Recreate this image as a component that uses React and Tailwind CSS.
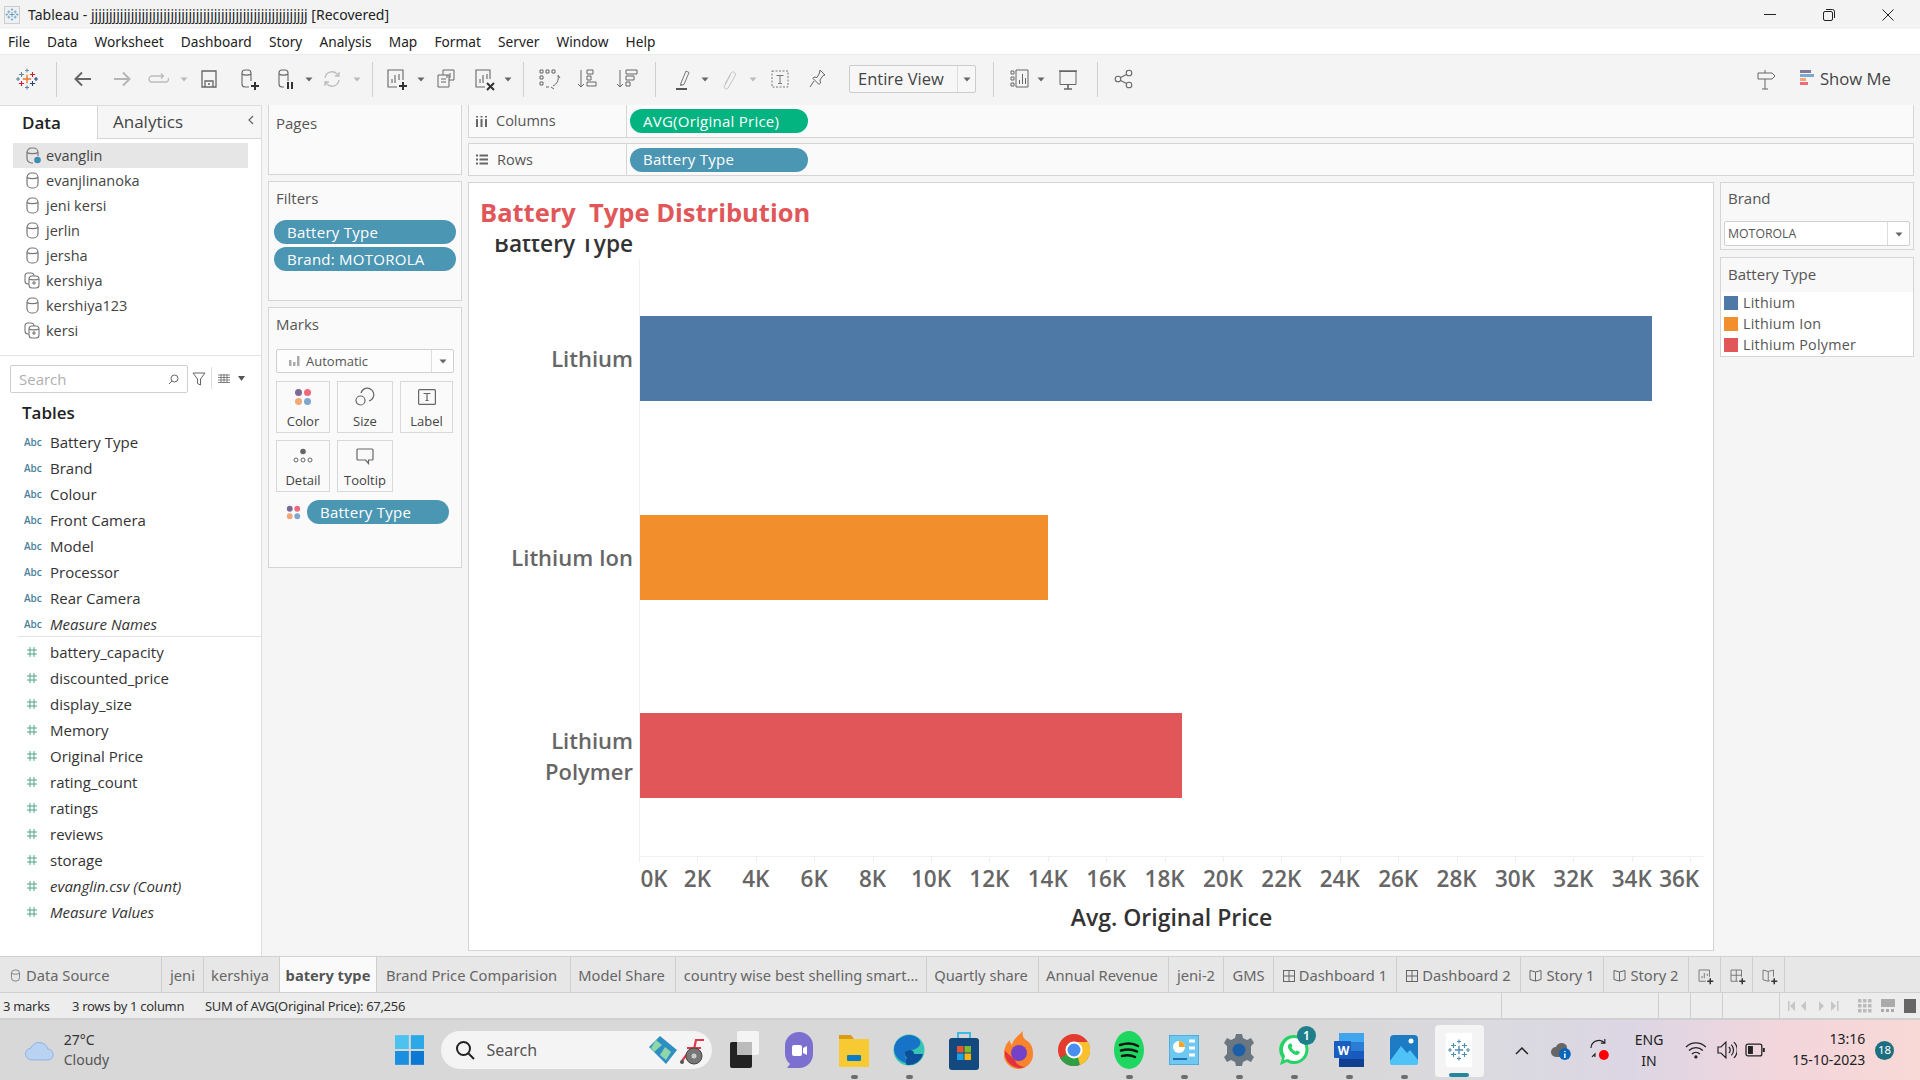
import React from "react";

const I = ({ c = "w-6 h-6 text-[#666]", sw = 1.3, children }) => (
  <svg className={c} viewBox="0 0 24 24" fill="none" stroke="currentColor" strokeWidth={sw}>{children}</svg>
);
const Dd = ({ c = "", light }) => (
  <svg className={`w-2 h-6 ${c} ${light ? "text-[#bbb]" : "text-[#666]"}`} viewBox="0 0 8 24"><path d="M0.5 10.5h7L4 14.5z" fill="currentColor" /></svg>
);
const Sep = ({ c }) => <div className={`w-px h-[35px] bg-[#d0d0d0] ${c}`} />;

const Cross = ({ x, y, r, col, w = 1.1 }) => (
  <path d={`M${x - r} ${y}H${x + r}M${x} ${y - r}V${y + r}`} stroke={col} strokeWidth={w} />
);
const TabLogo = ({ c, mono }) => (
  <svg className={c} viewBox="0 0 24 24" fill="none">
    <Cross x={12} y={12} r={4.2} col={mono || "#e8762c"} w={1.4} />
    <Cross x={6.5} y={7.5} r={2.6} col={mono || "#5b879b"} />
    <Cross x={17.5} y={7.5} r={2.6} col={mono || "#c72035"} />
    <Cross x={6.5} y={16.5} r={2.6} col={mono || "#c72035"} />
    <Cross x={17.5} y={16.5} r={2.6} col={mono || "#1f447e"} />
    <Cross x={12} y={3.5} r={2} col={mono || "#7099a6"} />
    <Cross x={12} y={20.5} r={2} col={mono || "#5b879b"} />
    <Cross x={3} y={12} r={2} col={mono || "#59879b"} />
    <Cross x={21} y={12} r={2} col={mono || "#1f447e"} />
  </svg>
);
const Plus = () => <path d="M15 19h8M19 15v8" stroke="#333" strokeWidth="2" />;

const Cyl = ({ c = "w-[15px] h-[17px] text-[#777]" }) => (
  <svg className={c} viewBox="0 0 15 17" fill="none" stroke="currentColor" strokeWidth="1.2">
    <rect x="2" y="1" width="11" height="15" rx="4.5" />
    <path d="M2 5.5c2 1.6 9 1.6 11 0" />
  </svg>
);
const CylCheck = () => (
  <svg className="w-[16px] h-[17px] text-[#777]" viewBox="0 0 16 17" fill="none" stroke="currentColor" strokeWidth="1.2">
    <path d="M8 16H6.5A4.5 4.5 0 0 1 2 11.500V5.500A4.500 4.500 0 0 1 6.500 1h2A4.500 4.500 0 0 1 13 5.500V9" />
    <path d="M2 5.500c2 1.600 9 1.600 11 0" />
    <circle cx="12.500" cy="13" r="3.300" fill="#3f8db0" stroke="none" />
  </svg>
);
const CylMulti = () => (
  <svg className="w-[16px] h-[17px] text-[#777]" viewBox="0 0 16 17" fill="none" stroke="currentColor" strokeWidth="1.1">
    <rect x="1" y="1" width="9" height="11" rx="3" />
    <rect x="5" y="4" width="10" height="12" rx="3" fill="#fff" />
    <path d="M5 7c2 1.200 8 1.200 10 0M8 11h4M10 9v4" />
  </svg>
);

const Dots = ({ c = "w-[18px] h-[18px]" }) => (
  <svg className={c} viewBox="0 0 18 18">
    <circle cx="4.500" cy="4.500" r="3.500" fill="#7b6a96" />
    <circle cx="13.500" cy="4.500" r="3.500" fill="#ef6a7a" />
    <circle cx="4.500" cy="13.500" r="3.500" fill="#f2a777" />
    <circle cx="13.500" cy="13.500" r="3.500" fill="#7ea6d0" />
  </svg>
);

const Pill = ({ c, children, green }) => (
  <div className={`${c} rounded-full flex items-center text-white text-[15px] tracking-[0.25px] ${green ? "bg-[#03b380]" : "bg-[#4b96b3]"}`}>{children}</div>
);

const Card = ({ c, title, pt = "pt-[8px]", children }) => (
  <div className={`${c} bg-[#fafafa] border border-[#d5d5d5]`}>
    <div className={`pl-[7px] ${pt} text-[15px] leading-5 text-[#555]`}>{title}</div>
    {children}
  </div>
);

const MarkBtn = ({ c, label, children }) => (
  <div className={`${c} h-[52px] border border-[#d8d8d8] flex flex-col items-center justify-between pt-[3px] pb-[2px] text-[13px] leading-[18px] text-[#444]`}>
    <div className="h-6 flex items-center justify-center">{children}</div>
    <div>{label}</div>
  </div>
);

const dims = ["Battery Type", "Brand", "Colour", "Front Camera", "Model", "Processor", "Rear Camera"];
const meas = ["battery_capacity", "discounted_price", "display_size", "Memory", "Original Price", "rating_count", "ratings", "reviews", "storage"];

const Field = ({ kind, label, italic }) => (
  <div className="h-[26px] flex items-center">
    {kind === "abc" ? (
      <div className="w-[50px] pl-6 text-[10px] font-semibold text-[#4a7f9b]">Abc</div>
    ) : (
      <div className="w-[50px] pl-[26px]">
        <svg className="w-3 h-3 text-[#4ea488]" viewBox="0 0 12 12" fill="none" stroke="currentColor" strokeWidth="1"><path d="M4 1v10M8 1v10M1 4h10M1 8h10" /></svg>
      </div>
    )}
    <div className={`text-[15px] text-[#333] ${italic ? "italic" : ""}`}>{label}</div>
  </div>
);

const ticks = ["0K", "2K", "4K", "6K", "8K", "10K", "12K", "14K", "16K", "18K", "20K", "22K", "24K", "26K", "28K", "30K", "32K", "34K", "36K"];

const Tab = ({ c, children, active }) => (
  <div className={`${c} h-full shrink-0 border-r border-[#cfcfcf] flex items-center justify-center pt-[2px] text-[14.700px] whitespace-nowrap ${active ? "bg-[#fafafa] font-bold text-[#555]" : "text-[#666]"}`}>{children}</div>
);
const Grid4 = () => (
  <svg className="w-[12px] h-[12px] mr-1 text-[#666]" viewBox="0 0 12 12" fill="none" stroke="currentColor"><rect x=".5" y=".5" width="11" height="11" /><path d="M6 .5v11M.5 6h11" /></svg>
);
const Book = () => (
  <svg className="w-[13px] h-[13px] mr-1 text-[#666]" viewBox="0 0 13 13" fill="none" stroke="currentColor"><path d="M1 1.500l5.500 1.500L12 1.500v9l-5.500 1.500L1 10.500zM6.500 3v9" /></svg>
);

const Slot = ({ c, children, dot }) => (
  <div className={`${c} w-[55px] h-full relative flex items-center justify-center shrink-0`}>
    {children}
    {dot && <div className="absolute bottom-[1px] w-[7px] h-[4px] rounded-full bg-[#6e6e6e]" />}
  </div>
);

export default function App() {
  return (
    <div className="w-[1920px] h-[1080px] overflow-hidden flex flex-col bg-[#f5f5f5] text-[#333] font-['Open_Sans','Noto_Sans',sans-serif]">
      {/* Title bar */}
      <div className="h-[29px] shrink-0 bg-[#f3f3f3] flex items-center pl-1 relative">
        <div className="w-[16px] h-[18px] bg-[#eef1f3] border border-[#ccc] flex items-center justify-center"><TabLogo c="w-[15px] h-[15px]" mono="#4f8db5" /></div>
        <div className="ml-2 text-[14px] text-[#222] whitespace-nowrap font-['Noto_Sans',sans-serif]">Tableau - <span>jjjjjjjjjjjjjjjjjjjjjjjjjjjjjjjjjjjjjjjjjjjjjjjjjjjjjjjjjjjj</span> [Recovered]</div>
        <div className="ml-auto flex items-center text-[#222]">
          <div className="w-[58px] flex justify-center"><div className="w-3 h-px bg-[#222]" /></div>
          <div className="w-[60px] flex justify-center">
            <svg className="w-3 h-3" viewBox="0 0 12 12" fill="none" stroke="currentColor"><rect x=".5" y="2.500" width="9" height="9" rx="1.500" /><path d="M3 .5h6.500A2 2 0 0 1 11.500 2.500V9" /></svg>
          </div>
          <div className="w-[58px] mr-[3px] flex justify-center">
            <svg className="w-3 h-3" viewBox="0 0 12 12" fill="none" stroke="currentColor"><path d="M.5.5l11 11M11.500.5l-11 11" /></svg>
          </div>
        </div>
      </div>
      {/* Menu */}
      <div className="h-[25px] shrink-0 bg-white flex items-center pl-2 pt-px gap-[17.200px] text-[13.700px] text-[#222] font-['Noto_Sans',sans-serif]">
        {["File", "Data", "Worksheet", "Dashboard", "Story", "Analysis", "Map", "Format", "Server", "Window", "Help"].map((m) => <span key={m}>{m}</span>)}
      </div>
      {/* Toolbar */}
      <div className="h-[51px] shrink-0 bg-[#f4f4f4] border-t border-[#ececec] flex items-center pb-[2px]">
        <div className="ml-[15px]"><TabLogo c="w-6 h-6" /></div>
        <Sep c="ml-[17px]" />
        <div className="ml-[14px]"><I sw={2} c="w-6 h-6 text-[#666]"><path d="M20 12H5M11 5.500L4.500 12l6.500 6.500" /></I></div>
        <div className="ml-[15px]"><I sw={2} c="w-6 h-6 text-[#b5b5b5]"><path d="M4 12h15M13 5.500l6.500 6.500-6.500 6.500" /></I></div>
        <div className="ml-[13px]"><I c="w-6 h-6 text-[#bcbcbc]"><path d="M16 9H5a2.500 2.500 0 0 0 0 6h14a2.500 2.500 0 0 0 2-4M14 6.500L16.500 9 14 11.500" /></I></div>
        <Dd c="ml-[9px]" light />
        <div className="ml-[9px]"><I><path d="M5 4h14v16H5zM8 20v-6h8v6M11 17h2" /></I></div>
        <div className="ml-[15px]"><I sw={1.1}><path d="M13 20H9a3 3 0 0 1-3-3V6a3 3 0 0 1 3-3h3a3 3 0 0 1 3 3v8M6 7c2 1.500 7 1.500 9 0" /><Plus /></I></div>
        <div className="ml-[13px]"><I sw={1.1}><path d="M11 20H9a3 3 0 0 1-3-3V6a3 3 0 0 1 3-3h3a3 3 0 0 1 3 3v8M6 7c2 1.500 7 1.500 9 0" /><path d="M15 15v7M19 15v7" stroke="#333" strokeWidth="2" /></I></div>
        <Dd c="ml-[8px]" />
        <div className="ml-[7px]"><I c="w-6 h-6 text-[#bcbcbc]"><path d="M5 11a7 7 0 0 1 12-4l2 2M19 13a7 7 0 0 1-12 4l-2-2M19 5v4h-4M5 19v-4h4" /></I></div>
        <Dd c="ml-[9px]" light />
        <Sep c="ml-[11px]" />
        <div className="ml-[11px]"><I sw={1.1}><path d="M13 20H4V3h15v10M8 16v-4M11 16V8M15 13V7" /><Plus /></I></div>
        <Dd c="ml-[9px]" />
        <div className="ml-[9px]"><I sw={1}><path d="M9 8V3h11v10h-5M13 11V8M16 11V6M4 8h11v12H4zM7 12h5M7 15h5" /></I></div>
        <div className="ml-[14px]"><I sw={1.1}><path d="M13 20H4V3h14v9M8 16v-4M11 16V8M15 12V7" /><path d="M15 16l7 7M22 16l-7 7" stroke="#333" strokeWidth="2" /></I></div>
        <Dd c="ml-[8px]" />
        <Sep c="ml-[11px]" />
        <div className="ml-[13px]"><I sw={1}><path d="M3 3h3v3H3zM9 3h3v3H9zM15 3h3v3h-3zM3 9h3v3H3zM3 15h3v3H3zM9 20h3M21 9c1 4-1 8-5 10M21 8l2 3M14 20l3 2" /></I></div>
        <div className="ml-[15px]"><I sw={1}><path d="M5 3v17M2 17l3 3 3-3M11 3h6v4h-6zM11 9h4v4h-4zM11 15h9v4h-9z" /></I></div>
        <div className="ml-[15px]"><I sw={1}><path d="M5 3v17M2 17l3 3 3-3M11 3h11v4H11zM11 9h8v4h-8zM11 15h4v4h-4z" /></I></div>
        <Sep c="ml-[16px]" />
        <div className="ml-[15px]"><I sw={1} c="w-6 h-6 text-[#777]"><path d="M10 16l5-12 3 1.500-5 12-3.500 1zM10 17l1 1" /><path d="M5 22h11" stroke="#555" strokeWidth="2" /></I></div>
        <Dd c="ml-[6px]" />
        <div className="ml-[8px]"><I sw={1} c="w-6 h-6 text-[#c4c4c4]"><path d="M8 17l6-11a2.500 2.500 0 0 1 4.300 2.500L11 21a2 2 0 0 1-3.500-2l6-11" /></I></div>
        <Dd c="ml-[8px]" light />
        <div className="ml-[11px]"><I sw={1} c="w-6 h-6 text-[#777]"><rect x="4" y="4" width="16" height="16" strokeDasharray="2 1.500" /><path d="M8.500 8.500h7M12 8.500v8M10 16.500h4" /></I></div>
        <div className="ml-[13px]"><I sw={1} c="w-6 h-6 text-[#666]"><path d="M15 3l5 5-2 .5-3 4.500.5 3-1.500 1.500-6-6L9 10l3 .5L14.500 6zM9 14l-4 6" /></I></div>
        <div className="ml-[20px] w-[127px] h-[28px] border border-[#ccc] rounded-[2px] flex items-center bg-[#f7f7f7]">
          <div className="pl-2 flex-1 text-[16.500px] text-[#444] whitespace-nowrap">Entire View</div>
          <div className="w-[18px] h-full border-l border-[#ddd] flex items-center justify-center"><Dd /></div>
        </div>
        <Sep c="ml-[17px]" />
        <div className="ml-[14px]"><I sw={1}><path d="M3 4h3v3H3zM3 10h3v3H3zM3 16h3v3H3zM8 3h12v17H8zM11.500 17v-4M14.500 17V7M17.500 17v-6" /></I></div>
        <Dd c="ml-[5px]" />
        <div className="ml-[11px]"><I sw={1}><path d="M4 4.500h16v13H4z" /><path d="M3 4h18M12 17.500V22M8 22h8" strokeWidth="1.600" /></I></div>
        <Sep c="ml-[17px]" />
        <div className="ml-[14px]"><I sw={1.1}><circle cx="6" cy="12" r="2.800" /><circle cx="17" cy="6" r="2.800" /><circle cx="17" cy="18" r="2.800" /><path d="M8.500 10.500l6-3M8.500 13.500l6 3" /></I></div>
        <div className="ml-auto"><I sw={1}><path d="M4 6h14l3 3-3 3H4zM11 3v3M11 12v10M8 22h6" /></I></div>
        <div className="ml-[22px] w-[14px] h-[18px] flex flex-col gap-px">
          <div className="h-[3px] w-[11px] bg-[#85789b]" /><div className="h-[3px] w-[14px] bg-[#7fa8d1]" /><div className="h-[3px] w-[6px] bg-[#f2a777]" /><div className="h-[3px] w-[8px] bg-[#ef6a7a]" />
        </div>
        <div className="ml-[6px] mr-[29px] text-[16.700px] text-[#444]">Show Me</div>
      </div>

      {/* Main */}
      <div className="flex-1 min-h-0 flex">
        {/* Data pane */}
        <div className="w-[262px] shrink-0 bg-white border-r border-[#ddd] border-t flex flex-col">
          <div className="h-[33px] shrink-0 flex">
            <div className="w-[97px] pl-[22px] flex items-center text-[17px] font-semibold text-[#222]">Data</div>
            <div className="flex-1 bg-[#f6f6f6] border-l border-b border-[#d5d5d5] pl-[15px] flex items-center justify-between pr-[6px] text-[17px] text-[#444]">
              <span>Analytics</span>
              <svg className="w-2 h-3 mb-1 text-[#666]" viewBox="0 0 8 12" fill="none" stroke="currentColor" strokeWidth="1.200"><path d="M6 2L2 6l4 4" /></svg>
            </div>
          </div>
          <div className="h-[217px] shrink-0 border-b border-[#e2e2e2] pt-[4px] pl-[13px] text-[14.500px] text-[#444]">
            <div className="h-[25px] w-[235px] bg-[#e6e6e6] flex items-center pl-[12px] gap-[3px]"><CylCheck /><span className="ml-[2px]">evanglin</span></div>
            {[["evanjlinanoka", 0], ["jeni kersi", 0], ["jerlin", 0], ["jersha", 0], ["kershiya", 1], ["kershiya123", 0], ["kersi", 1]].map(([n, m]) => (
              <div key={n} className="h-[25px] flex items-center pl-[11px] gap-[6px]">{m ? <CylMulti /> : <div className="w-[16px] flex justify-center"><Cyl /></div>}<span>{n}</span></div>
            ))}
          </div>
          <div className="h-[36px] shrink-0 pt-[9px] pl-[10px] flex items-start">
            <div className="w-[178px] h-[28px] border border-[#cfcfcf] rounded-[2px] flex items-center justify-between px-2 text-[15px] text-[#b0b0b0]">
              <span>Search</span>
              <svg className="w-[11px] h-[11px] text-[#666]" viewBox="0 0 11 11" fill="none" stroke="currentColor"><circle cx="6.500" cy="4.500" r="3.500" /><path d="M4 7l-3 3" /></svg>
            </div>
            <svg className="ml-[4px] mt-[7px] w-[14px] h-[14px] text-[#666]" viewBox="0 0 14 14" fill="none" stroke="currentColor"><path d="M1 1h12L8.500 7v6l-3-1.500V7z" /></svg>
            <div className="ml-[5px] mt-[2px] w-px h-[22px] bg-[#ddd]" />
            <svg className="ml-[6px] mt-[9px] w-3 h-[9px] text-[#666]" viewBox="0 0 12 9" stroke="currentColor" fill="none"><path d="M0 1h12M0 3.500h12M0 6h12M0 8.500h12M3 0v9M6 0v9M9 0v9" strokeWidth=".8" /></svg>
            <svg className="ml-[8px] mt-[11px] w-[7px] h-[5px] text-[#555]" viewBox="0 0 7 5"><path d="M0 0h7L3.500 5z" fill="currentColor" /></svg>
          </div>
          <div className="h-[34px] shrink-0 pl-[22px] pt-[8px] text-[17px] font-semibold text-[#222] leading-[26px]">Tables</div>
          <div className="pt-[3px]">
            {dims.map((d) => <Field key={d} kind="abc" label={d} />)}
            <Field kind="abc" label="Measure Names" italic />
          </div>
          <div className="ml-[18px] mt-[-1px] h-px bg-[#e2e2e2] mb-[2px]" />
          <div>
            {meas.map((d) => <Field key={d} label={d} />)}
            <Field label="evanglin.csv (Count)" italic />
            <Field label="Measure Values" italic />
          </div>
        </div>

        {/* Cards */}
        <div className="w-[206px] shrink-0 pl-[6px] pr-[6px] flex flex-col">
          <Card c="h-[70px] border-t-0" title="Pages" />
          <Card c="mt-[6px] h-[120px]" pt="pt-[6px]" title="Filters">
            <div className="mt-[12px] mx-[5px] flex flex-col gap-[3px]">
              <Pill c="h-6 pl-[13px]">Battery Type</Pill>
              <Pill c="h-6 pl-[13px]">Brand: MOTOROLA</Pill>
            </div>
          </Card>
          <Card c="mt-[6px] h-[261px]" pt="pt-[6px]" title="Marks">
            <div className="mx-[7px] mt-[15px] h-[24px] border border-[#d0d0d0] rounded-[2px] flex items-center bg-[#fdfdfd]">
              <svg className="ml-[12px] w-[11px] h-[10px] text-[#aaa]" viewBox="0 0 11 10" fill="currentColor"><path d="M0 4h2.500v6H0zM4 6h2.500v4H4zM8 0h2.500v10H8z" /></svg>
              <span className="ml-[6px] flex-1 text-[13px] pt-px text-[#555]">Automatic</span>
              <div className="w-[22px] h-full border-l border-[#ddd] flex items-center justify-center"><Dd /></div>
            </div>
            <div className="mx-[7px] mt-[8px] flex gap-[7px]">
              <MarkBtn c="w-[54px]" label="Color"><Dots /></MarkBtn>
              <MarkBtn c="w-[56px]" label="Size">
                <svg className="w-[20px] h-[20px] text-[#666]" viewBox="0 0 20 20" fill="none" stroke="currentColor" strokeWidth="1.200"><path d="M6 6a6.500 6.500 0 1 1 8 8" /><circle cx="5.500" cy="13.500" r="4.500" /></svg>
              </MarkBtn>
              <MarkBtn c="w-[53px]" label="Label">
                <svg className="w-[18px] h-[16px] text-[#666]" viewBox="0 0 18 16" fill="none" stroke="currentColor" strokeWidth="1.200"><rect x=".6" y=".6" width="16.800" height="14.800" rx="1" /><path d="M5.500 4.500h7M9 4.500v7M7.500 11.500h3" /></svg>
              </MarkBtn>
            </div>
            <div className="mx-[7px] mt-[7px] flex gap-[7px]">
              <MarkBtn c="w-[54px]" label="Detail">
                <svg className="w-[20px] h-[16px] text-[#666]" viewBox="0 0 20 16" fill="none" stroke="currentColor"><circle cx="10" cy="3.500" r="2.800" fill="currentColor" stroke="none" /><circle cx="3" cy="12" r="2" /><circle cx="10" cy="12" r="2" /><circle cx="17" cy="12" r="2" /></svg>
              </MarkBtn>
              <MarkBtn c="w-[56px]" label="Tooltip">
                <svg className="w-[18px] h-[17px] text-[#666]" viewBox="0 0 18 17" fill="none" stroke="currentColor" strokeWidth="1.200"><path d="M2 1h14a1 1 0 0 1 1 1v9a1 1 0 0 1-1 1h-3.500v3.500L9.500 12H2a1 1 0 0 1-1-1V2a1 1 0 0 1 1-1z" /></svg>
              </MarkBtn>
            </div>
            <div className="mt-[8px] pl-[17px] flex items-center gap-[6px]">
              <Dots c="w-[15px] h-[15px]" />
              <Pill c="w-[142px] h-6 pl-[13px]">Battery Type</Pill>
            </div>
          </Card>
        </div>

        {/* Right of cards */}
        <div className="flex-1 min-w-0 flex flex-col pr-[6px]">
          <div className="h-[33px] shrink-0 bg-[#fafafa] border-b border-r border-[#d5d5d5] border-l flex items-center">
            <div className="w-[158px] h-full border-r border-[#d5d5d5] flex items-center pl-[7px] text-[14.500px] text-[#555]">
              <svg className="w-[11px] h-[11px] text-[#666]" viewBox="0 0 11 11" fill="currentColor"><path d="M0 3h2v8H0zM4.500 3h2v8h-2zM9 3h2v8H9zM0 0h2v1.500H0zM4.500 0h2v1.500h-2zM9 0h2v1.500H9z" /></svg>
              <span className="ml-[9px]">Columns</span>
            </div>
            <Pill green c="ml-[3px] w-[178px] h-6 pl-[13px]">AVG(Original Price)</Pill>
          </div>
          <div className="mt-[5px] h-[33px] shrink-0 bg-[#fafafa] border border-[#d5d5d5] flex items-center">
            <div className="w-[158px] h-full border-r border-[#d5d5d5] flex items-center pl-[7px] text-[14.500px] text-[#555]">
              <svg className="w-[12px] h-[11px] text-[#666]" viewBox="0 0 12 11" fill="currentColor"><path d="M0 .5h2v2H0zM3.500 .5H12v2H3.500zM0 4.500h2v2H0zM3.500 4.500H12v2H3.500zM0 8.500h2v2H0zM3.500 8.500H12v2H3.500z" /></svg>
              <span className="ml-[9px]">Rows</span>
            </div>
            <Pill c="ml-[3px] w-[178px] h-6 pl-[13px]">Battery Type</Pill>
          </div>
          <div className="mt-[6px] h-[769px] shrink-0 flex gap-[6px]">
            {/* Viz */}
            <div className="w-[1246px] h-full bg-white border border-[#d5d5d5] overflow-hidden flex flex-col">
              <div className="h-[56px] shrink-0 pl-[11px] pt-[11px] text-[25.500px] leading-9 font-bold text-[#e15759] whitespace-pre">Battery  Type Distribution</div>
              <div className="h-[20px] shrink-0 overflow-hidden pl-[25px]">
                <div className="mt-[-10px] text-[22.700px] leading-[30px] font-semibold text-[#333]">Battery Type</div>
              </div>
              <div className="flex h-[199px] shrink-0">
                <div className="w-[170px] pr-[6px] flex items-center justify-end text-right text-[22px] leading-[31px] font-semibold text-[#666]">Lithium</div>
                <div className="flex-1 border-l border-[#f0f0f0] flex items-center"><div className="w-[1012px] h-[85px] bg-[#4e79a7]" /></div>
              </div>
              <div className="flex h-[199px] shrink-0">
                <div className="w-[170px] pr-[6px] flex items-center justify-end text-right text-[22px] leading-[31px] font-semibold text-[#666]">Lithium Ion</div>
                <div className="flex-1 border-l border-[#f0f0f0] flex items-center"><div className="w-[408px] h-[85px] bg-[#f28e2b]" /></div>
              </div>
              <div className="flex h-[199px] shrink-0">
                <div className="w-[170px] pr-[6px] pb-[2px] flex items-center justify-end text-right text-[22px] leading-[31px] font-semibold text-[#666]">Lithium<br />Polymer</div>
                <div className="flex-1 border-l border-[#f0f0f0] flex items-center"><div className="w-[542px] h-[85px] bg-[#e15759] mt-[-2px]" /></div>
              </div>
              {/* Axis */}
              <div className="ml-[170px] w-[1065px] h-[46px] shrink-0 border-t border-[#efefef] relative">
                {ticks.map((t, i) => {
                  const x = i * 58.4;
                  const shift = i === 0 ? 15 : i === 18 ? -11 : 0;
                  return (
                    <React.Fragment key={t}>
                      <div className="absolute top-0 w-px h-[5px] bg-[#efefef]" style={{ left: x }} />
                      <div className="absolute top-[7px] w-[60px] text-center text-[22.500px] leading-[30px] font-semibold text-[#666]" style={{ left: x + shift - 30 }}>{t}</div>
                    </React.Fragment>
                  );
                })}
              </div>
              <div className="ml-[170px] w-[1065px] text-center text-[23px] leading-[30px] font-semibold text-[#333]">Avg. Original Price</div>
            </div>
            {/* Legend */}
            <div className="flex-1 flex flex-col">
              <div className="h-[68px] shrink-0 bg-[#f8f8f8] border border-[#d5d5d5] relative">
                <div className="pl-[7px] pt-[5px] text-[15px] leading-5 text-[#555]">Brand</div>
                <div className="absolute left-[3px] right-[3px] bottom-[3px] h-[25px] bg-white border border-[#d0d0d0] rounded-[2px] flex items-center">
                  <span className="flex-1 pl-[3px] pt-px text-[12.300px] text-[#555]">MOTOROLA</span>
                  <div className="w-[22px] h-full border-l border-[#ddd] flex items-center justify-center"><Dd /></div>
                </div>
              </div>
              <div className="mt-[7px] h-[100px] shrink-0 bg-white border border-[#d5d5d5] flex flex-col">
                <div className="h-[34px] shrink-0 bg-[#f8f8f8] pl-[7px] pt-[6px] text-[15px] leading-5 text-[#555]">Battery Type</div>
                <div className="pl-[3px] text-[14.300px] text-[#555] tracking-[0.25px]">
                  {[["Lithium", "bg-[#4e79a7]"], ["Lithium Ion", "bg-[#f28e2b]"], ["Lithium Polymer", "bg-[#e15759]"]].map(([t, b]) => (
                    <div key={t} className="h-[21px] flex items-center gap-[5px]"><div className={`w-[14px] h-[14px] ${b}`} /><span>{t}</span></div>
                  ))}
                </div>
              </div>
            </div>
          </div>
          <div className="flex-1" />
        </div>
      </div>

      {/* Tabs */}
      <div className="h-[37px] shrink-0 bg-[#e7e7e7] border-t border-[#d0d0d0] border-b flex items-stretch font-['Noto_Sans','Open_Sans',sans-serif]">
        <Tab c="w-[162px] !justify-start pl-[10px]"><Cyl c="w-[11px] h-[13px] mr-[5px] text-[#777]" />Data Source</Tab>
        <Tab c="w-[42px]">jeni</Tab>
        <Tab c="w-[76px] pr-[3px]">kershiya</Tab>
        <Tab c="w-[97px]" active>batery type</Tab>
        <Tab c="w-[194px] pr-[4px]">Brand Price Comparision</Tab>
        <Tab c="w-[105px] pr-[3px]">Model Share</Tab>
        <Tab c="w-[251px]">country wise best shelling smart...</Tab>
        <Tab c="w-[112px] pr-[3px]">Quartly share</Tab>
        <Tab c="w-[130px] pr-[3px]">Annual Revenue</Tab>
        <Tab c="w-[55px]">jeni-2</Tab>
        <Tab c="w-[50px]">GMS</Tab>
        <Tab c="w-[123px]"><Grid4 />Dashboard 1</Tab>
        <Tab c="w-[124px]"><Grid4 />Dashboard 2</Tab>
        <Tab c="w-[83px]"><Book />Story 1</Tab>
        <Tab c="w-[85px]"><Book />Story 2</Tab>
        <Tab c="w-[32px]"><I c="w-[18px] h-[18px] text-[#777]"><path d="M13 19H4V4h14v9M8 15v-3M11 15V8M15 12V9" /><Plus /></I></Tab>
        <Tab c="w-[32px]"><I c="w-[18px] h-[18px] text-[#777]"><path d="M13 19H4V4h14v9M11 4v15M4 11h14" /><Plus /></I></Tab>
        <Tab c="w-[32px]"><I c="w-[18px] h-[18px] text-[#777]"><path d="M13 18l-2 1-7-2V4l7 2 7-2v9M11 6v13" /><Plus /></I></Tab>
      </div>

      {/* Status */}
      <div className="h-[27px] shrink-0 bg-[#ededed] border-b-2 border-[#cfcfcf] flex items-center text-[13px] text-[#333] tracking-[-0.3px] font-['Noto_Sans','Open_Sans',sans-serif]">
        <span className="ml-[3px] w-[69px] pt-[2px]">3 marks</span>
        <span className="w-[133px] pt-[2px]">3 rows by 1 column</span>
        <span className="w-[1296px] pt-[2px]">SUM of AVG(Original Price): 67,256</span>
        <div className="w-[157px] h-full border-l border-[#d0d0d0]" />
        <div className="w-[32px] h-full border-l border-[#d0d0d0]" />
        <div className="w-[32px] h-full border-l border-[#d0d0d0]" />
        <div className="w-[57px] h-full border-l border-[#d0d0d0]" />
        <div className="flex-1 h-full border-l border-[#d0d0d0] flex items-center">
          <svg className="ml-[8px] w-[56px] h-[10px] text-[#c6c6c6]" viewBox="0 0 56 10" fill="currentColor"><path d="M0 0h1.500v10H0zM7 0v10L2 5zM18 0v10l-5-5zM31 0v10l5-5zM43 0v10l5-5zM49 0h1.500v10H49z" /></svg>
          <svg className="ml-[14px] w-[14px] h-[14px] text-[#bbb]" viewBox="0 0 14 14" fill="currentColor"><path d="M0 0h3.500v3.500H0zM5 0h3.500v3.500H5zM10 0h3.500v3.500H10zM0 5h3.500v3.500H0zM5 5h3.500v3.500H5zM10 5h3.500v3.500H10zM0 10h3.500v3.500H0zM5 10h3.500v3.500H5zM10 10h3.500v3.500H10z" /></svg>
          <svg className="ml-[9px] w-[14px] h-[14px] text-[#aaa]" viewBox="0 0 14 14" fill="currentColor"><path d="M0 0h14v8H0zM0 10h3v3H0zM5 10h3v3H5zM10 10h3v3h-3z" /></svg>
          <div className="ml-[9px] w-[12px] h-[14px] bg-[#666]" />
        </div>
      </div>

      {/* Taskbar */}
      <div className="h-[60px] shrink-0 flex items-center bg-[linear-gradient(to_right,#d8d8d8_0%,#d8d8d8_68%,#dadae0_78%,#dcd6e4_85%,#f3d6dc_93%,#f8d9d6_100%)] font-['Noto_Sans','Open_Sans',sans-serif]">
        <svg className="ml-[25px] w-[30px] h-[22px]" viewBox="0 0 30 22"><path d="M7 21a6 6 0 0 1-1-12 9 9 0 0 1 17 1 5.500 5.500 0 0 1 0 11z" fill="#b9d2f2" stroke="#8fb2e0" /></svg>
        <div className="ml-[9px] w-[100px] text-[14px] leading-[20px] text-[#333]"><div>27°C</div><div className="text-[#555]">Cloudy</div></div>
        <svg className="ml-[232px] w-[30px] h-[30px]" viewBox="0 0 30 30"><rect width="14" height="14" fill="#4cc2ee" /><rect x="16" width="14" height="14" fill="#2aa8e8" /><rect y="16" width="14" height="14" fill="#1a8fdf" /><rect x="16" y="16" width="14" height="14" fill="#0b78d4" /></svg>
        <div className="ml-[17px] w-[273px] h-[38px] rounded-full bg-[#f4f4f4] flex items-center pl-[14px] text-[16px] text-[#555]">
          <svg className="w-[20px] h-[20px] text-[#222]" viewBox="0 0 20 20" fill="none" stroke="currentColor" strokeWidth="2"><circle cx="8.500" cy="8.500" r="6.500" /><path d="M13 13l6 6" /></svg>
          <span className="ml-[11px] flex-1">Search</span>
          <svg className="mr-[4px] w-[60px] h-[32px]" viewBox="0 0 60 32">
            <path d="M1 13L12 2l17 14-11 14z" fill="#2f8fc4" /><path d="M8 6l6 5-8 7-3-4zM17 13l6 5-5 8-6-5z" fill="#8fd6a8" />
            <path d="M34 27l5-7h6l3-14h8" stroke="#e0384c" strokeWidth="2.200" fill="none" /><path d="M39 14h14" stroke="#e0384c" strokeWidth="2" />
            <circle cx="46" cy="22" r="8" fill="#777" stroke="#444" /><circle cx="46" cy="22" r="2.500" fill="#ccc" /><circle cx="34" cy="28" r="2" fill="#555" />
          </svg>
        </div>
        <div className="flex h-full ml-[5px]">
          <Slot>
            <svg className="w-[30px] h-[38px]" viewBox="0 0 30 38"><rect x="8" width="22" height="24" rx="2" fill="#f4f4f4" /><rect x="1" y="11" width="22" height="26" rx="2" fill="#222" /><rect x="8" y="11" width="15" height="13" fill="#bbb" /></svg>
          </Slot>
          <Slot>
            <svg className="w-[30px] h-[38px]" viewBox="0 0 30 38"><path d="M15 1a14 14 0 0 1 14 14v8a14 14 0 0 1-14 14H3l3-4a14 14 0 0 1-5-10v-8A14 14 0 0 1 15 1z" fill="#7b6fd0" /><rect x="8" y="14" width="10" height="11" rx="2" fill="#fff" /><path d="M19 17l4-2v9l-4-2z" fill="#fff" /></svg>
          </Slot>
          <Slot dot>
            <svg className="w-[30px] h-[34px]" viewBox="0 0 30 34"><path d="M0 2h12l3 4H0z" fill="#d99c12" /><rect y="6" width="30" height="28" fill="#f7c933" /><rect x="8" y="22" width="14" height="6" rx="1" fill="#0a7cc8" /></svg>
          </Slot>
          <Slot dot>
            <svg className="w-[32px] h-[34px]" viewBox="0 0 32 34"><circle cx="16" cy="17" r="15.500" fill="#36c5b2" /><path d="M1 17A15 15 0 0 1 26 6c4 6-2 11-9 11-6 0-7 5-3 9 4 3 9 2 11 1a15 15 0 0 1-24-10z" fill="#1673c8" /><path d="M14 25c-4-4-3-8 3-8 3 0 4 2 4 4h9a15 15 0 0 1-16 11c-2-2-1-5 0-7z" fill="#0d4f9a" /></svg>
          </Slot>
          <Slot>
            <svg className="w-[30px] h-[39px]" viewBox="0 0 30 39"><path d="M9 8V2h12v6" fill="none" stroke="#3bbce8" strokeWidth="2" /><rect y="7" width="30" height="32" rx="3" fill="#14497f" /><rect x="8" y="15" width="6.500" height="6.500" fill="#e8542f" /><rect x="15.500" y="15" width="6.500" height="6.500" fill="#7cbb2a" /><rect x="8" y="22.500" width="6.500" height="6.500" fill="#1aa2e6" /><rect x="15.500" y="22.500" width="6.500" height="6.500" fill="#f9b50d" /></svg>
          </Slot>
          <Slot>
            <svg className="w-[30px] h-[38px]" viewBox="0 0 30 38"><path d="M15 38A15 15 0 0 1 1 17c1-4 3-6 5-8 0 3 1 4 2 5 1-6 6-9 11-14-1 4 0 7 3 9 5 3 7 8 7 13a15 15 0 0 1-14 16z" fill="#f9842c" /><path d="M1 20a15 15 0 0 0 20 16c-5 0-9-3-10-7z" fill="#e3313e" /><circle cx="15" cy="22" r="8" fill="#7342c8" /></svg>
          </Slot>
          <Slot>
            <svg className="w-[32px] h-[32px]" viewBox="0 0 32 32"><circle cx="16" cy="16" r="16" fill="#e33b2e" /><path d="M16 16L30 24A16 16 0 0 1 9 30z" fill="#2f9e44" /><path d="M16 8h14a16 16 0 0 1-8 23z" fill="#fbc02d" /><path d="M16 16L2 24A16 16 0 0 0 16 32z" fill="#2f9e44" /><circle cx="16" cy="16" r="7.500" fill="#4a8ff0" stroke="#fff" strokeWidth="2" /></svg>
          </Slot>
          <Slot dot>
            <svg className="w-[30px] h-[38px]" viewBox="0 0 30 38"><ellipse cx="15" cy="19" rx="15" ry="19" fill="#1ed760" /><path d="M6 14c6-2 13-2 18 1M7 19.500c5-1.500 11-1.500 16 1M8 25c4-1 9-1 13 1" stroke="#111" strokeWidth="2.500" fill="none" strokeLinecap="round" /></svg>
          </Slot>
          <Slot dot>
            <svg className="w-[30px] h-[30px]" viewBox="0 0 30 30"><rect width="30" height="30" fill="#6ec8f0" stroke="#2f93cc" /><circle cx="10" cy="12" r="6" fill="#fff" /><path d="M10 12V6a6 6 0 0 1 6 6z" fill="#f5a623" /><path d="M20 6h6M20 13h6M20 20h6" stroke="#fff" strokeWidth="3" /><path d="M4 24h14" stroke="#1d6fb0" strokeWidth="2" /></svg>
          </Slot>
          <Slot dot>
            <svg className="w-[30px] h-[32px]" viewBox="0 0 30 32"><path d="M12 0h6l1 4 4 2 4-2 3 5-3 3v8l3 3-3 5-4-2-4 2-1 4h-6l-1-4-4-2-4 2-3-5 3-3v-8L0 9l3-5 4 2 4-2z" fill="#6b7780" /><circle cx="15" cy="16" r="6.500" fill="#1c5fa8" /></svg>
          </Slot>
          <Slot dot>
            <svg className="w-[30px] h-[34px]" viewBox="0 0 30 34"><path d="M15 2a14.500 14.500 0 0 1 0 29c-3 0-5-.5-7-2l-7 3 2-7A14.500 14.500 0 0 1 15 2z" fill="#25d366" /><path d="M15 5a11.500 11.500 0 0 1 0 23c-2.500 0-4.500-.7-6-2l-4 1 1-4A11.500 11.500 0 0 1 15 5z" fill="#fff" /><path d="M10 11c1-1 2-1 2.500 0l1 2-1 1.500c1 2 2 3 4 4l1.500-1 2 1c1 .5 1 1.500 0 2.500-2 2-5 1-8-2s-4-6-2-8z" fill="#25d366" /></svg>
            <div className="absolute top-[6px] left-[30px] w-[19px] h-[19px] rounded-full bg-[#1d7f8c] text-white text-[12px] font-semibold flex items-center justify-center">1</div>
          </Slot>
          <Slot dot>
            <svg className="w-[30px] h-[34px]" viewBox="0 0 30 34"><rect x="5" width="25" height="9" fill="#41a5ee" /><rect x="5" y="9" width="25" height="9" fill="#2b7cd3" /><rect x="5" y="18" width="25" height="8" fill="#185abd" /><rect x="5" y="26" width="25" height="8" fill="#103f91" /><rect y="8" width="17" height="17" rx="1" fill="#1a5dc0" /></svg>
            <span className="absolute left-[16px] top-[22px] text-white text-[12px] font-bold">W</span>
          </Slot>
          <Slot dot>
            <svg className="w-[28px] h-[30px]" viewBox="0 0 28 30"><rect width="28" height="30" rx="4" fill="#1d7bc4" /><path d="M0 26l11-15 6 7 3-3 8 10v2a4 4 0 0 1-4 4H4a4 4 0 0 1-4-4z" fill="#4fc3f7" /><circle cx="21" cy="6" r="2.500" fill="#fff" /></svg>
          </Slot>
          <div className="w-[55px] h-full relative flex items-center justify-center shrink-0">
            <div className="absolute top-[5px] bottom-[3px] left-[3px] right-[3px] rounded-[4px] bg-[#f4f4f4]" />
            <div className="relative w-[26px] h-[34px] bg-[#fff] flex items-center justify-center"><TabLogo c="w-[24px] h-[24px]" mono="#4f8db5" /></div>
            <div className="absolute bottom-[3px] w-[20px] h-[4px] rounded-full bg-[#26869a]" />
          </div>
        </div>
        <svg className="ml-[28px] w-[14px] h-[9px] text-[#222]" viewBox="0 0 14 9" fill="none" stroke="currentColor" strokeWidth="1.500"><path d="M1 8l6-6 6 6" /></svg>
        <svg className="ml-[21px] w-[22px] h-[22px]" viewBox="0 0 22 22"><path d="M6 18a5 5 0 0 1 0-10 6 6 0 0 1 11-1v11z" fill="#666" /><circle cx="15" cy="15" r="6" fill="#0a66b8" /><path d="M15 12v1M15 14.500V19" stroke="#fff" strokeWidth="1.500" /></svg>
        <svg className="ml-[18px] w-[22px] h-[24px] text-[#222]" viewBox="0 0 22 24" fill="none" stroke="currentColor" strokeWidth="1.200"><path d="M2 10a8 8 0 0 1 14-5M16 1v4h-4M3 19l3-3v3" /><circle cx="15" cy="17" r="5" fill="#f00" stroke="none" /></svg>
        <div className="ml-[19px] w-[38px] text-center text-[14px] leading-[21px] text-[#222]"><div>ENG</div><div>IN</div></div>
        <svg className="ml-[17px] w-[22px] h-[18px] text-[#222]" viewBox="0 0 22 18" fill="none" stroke="currentColor" strokeWidth="1.300"><path d="M1 6a14 14 0 0 1 20 0M4 9.500a10 10 0 0 1 14 0M7 13a6 6 0 0 1 8 0" /><circle cx="11" cy="16" r="1" fill="currentColor" /></svg>
        <svg className="ml-[9px] w-[22px] h-[20px] text-[#222]" viewBox="0 0 22 20" fill="none" stroke="currentColor" strokeWidth="1.200"><path d="M2 7h3l5-5v16l-5-5H2zM13 7a4 4 0 0 1 0 6M15.500 4.500a8 8 0 0 1 0 11M18 2a11 11 0 0 1 0 16" /></svg>
        <svg className="ml-[8px] w-[21px] h-[14px] text-[#222]" viewBox="0 0 21 14" fill="none" stroke="currentColor" strokeWidth="1.300"><rect x="1" y="1" width="16" height="12" rx="2" /><rect x="3" y="3" width="5" height="8" fill="currentColor" stroke="none" /><path d="M19 5v4" strokeWidth="2" /></svg>
        <div className="ml-auto w-[100px] pb-[2px] text-right text-[14px] leading-[21px] text-[#222]"><div>13:16</div><div>15-10-2023</div></div>
        <div className="ml-[10px] mr-[26px] w-[19px] h-[19px] rounded-full bg-[#1d6f7f] text-white text-[11.500px] flex items-center justify-center">18</div>
      </div>
    </div>
  );
}
